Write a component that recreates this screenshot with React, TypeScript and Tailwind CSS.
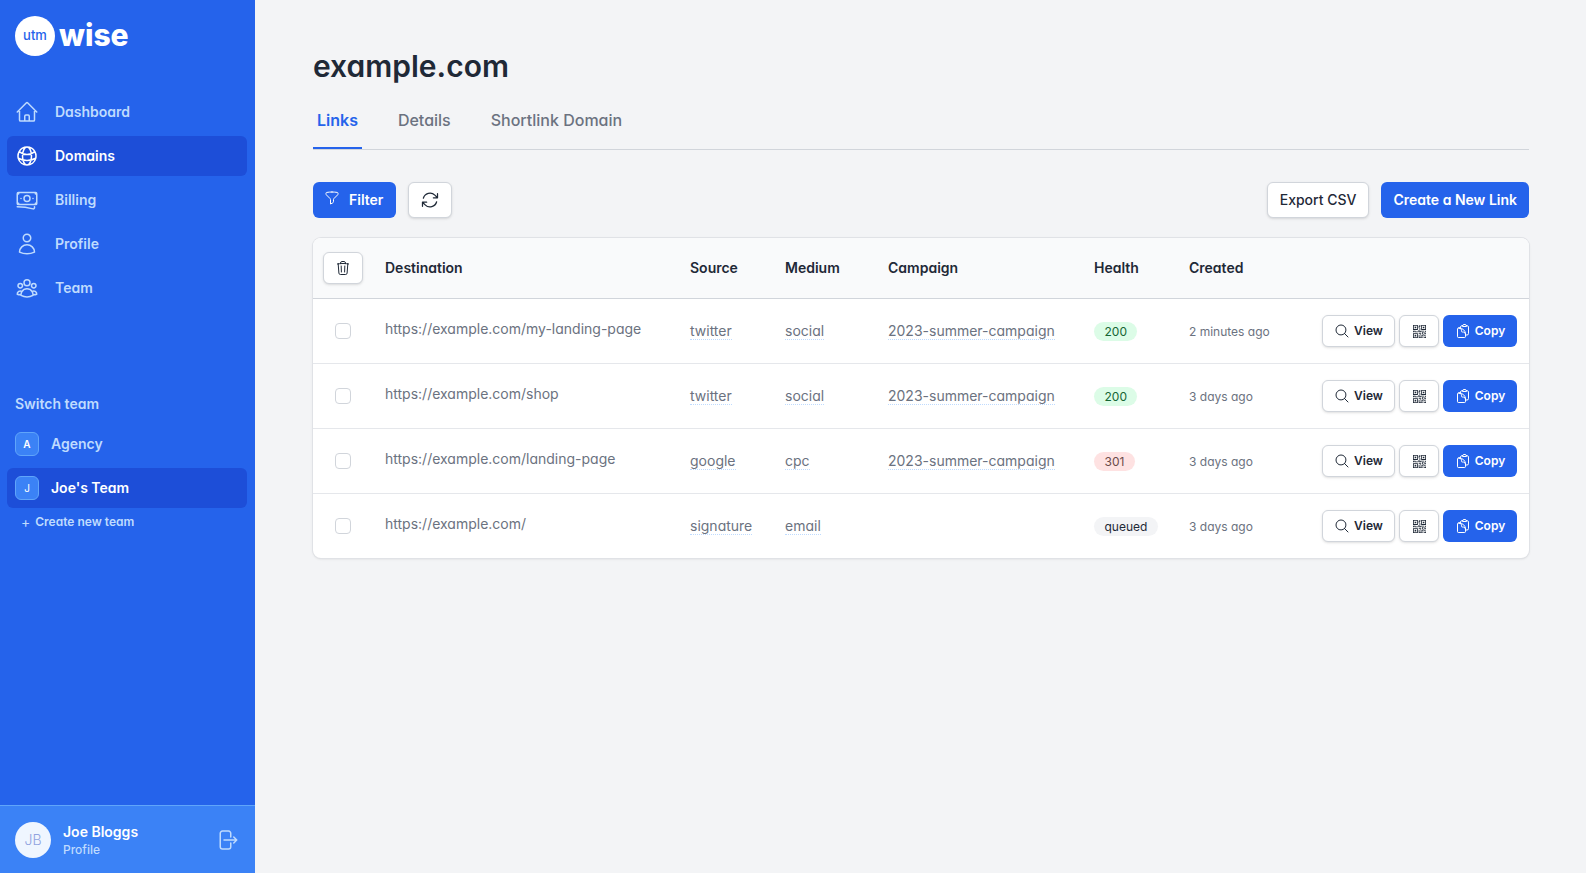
import React from 'react';
import {
  HiOutlineHome,
  HiOutlineGlobeAlt,
  HiOutlineBanknotes,
  HiOutlineUser,
  HiOutlineUserGroup,
  HiOutlineFunnel,
  HiOutlineArrowPath,
  HiOutlineTrash,
  HiOutlineMagnifyingGlass,
  HiOutlineClipboardDocument,
  HiOutlineArrowRightOnRectangle,
} from 'react-icons/hi2';
import { BsQrCode } from 'react-icons/bs';

const rows = [
  { url: 'https://example.com/my-landing-page', source: 'twitter', medium: 'social', campaign: '2023-summer-campaign', health: '200', created: '2 minutes ago' },
  { url: 'https://example.com/shop', source: 'twitter', medium: 'social', campaign: '2023-summer-campaign', health: '200', created: '3 days ago' },
  { url: 'https://example.com/landing-page', source: 'google', medium: 'cpc', campaign: '2023-summer-campaign', health: '301', created: '3 days ago' },
  { url: 'https://example.com/', source: 'signature', medium: 'email', campaign: '', health: 'queued', created: '3 days ago' },
];

const nav = [
  { label: 'Dashboard', icon: HiOutlineHome },
  { label: 'Domains', icon: HiOutlineGlobeAlt, active: true },
  { label: 'Billing', icon: HiOutlineBanknotes },
  { label: 'Profile', icon: HiOutlineUser },
  { label: 'Team', icon: HiOutlineUserGroup },
];

function healthClass(h: string) {
  if (h === '200') return 'bg-[#dcfce7] text-[#166534]';
  if (h === '301') return 'bg-[#fee2e2] text-[#6b4b4b]';
  return 'bg-[#f3f4f6] text-[#1f2937]';
}

export default function App() {
  return (
    <div className="flex h-[873px] bg-[#f3f4f6] font-['Inter',sans-serif] [font-feature-settings:'cv11'] overflow-hidden">
      <aside className="w-[255px] shrink-0 bg-[#2563eb] flex flex-col text-white">
        <div className="px-[15px] pt-[16px] flex items-start gap-[4px] h-[92px]">
          <div className="w-10 h-10 rounded-full bg-white text-[#2563eb] flex items-center justify-center text-[13px] font-medium">utm</div>
          <span className="text-[30px] font-extrabold leading-[38px]">wise</span>
        </div>
        <nav className="pl-[7px] pr-[8px] flex flex-col gap-[4px]">
          {nav.map((n) => (
            <div key={n.label} className={`h-10 rounded-md flex items-center gap-[16px] px-[8px] text-[14px] font-semibold ${n.active ? 'bg-[#1d4ed8] text-white' : 'text-[#bfdbfe]'}`}>
              <n.icon size={24} />
              <span className="pb-[2px]">{n.label}</span>
            </div>
          ))}
        </nav>
        <div className="px-[15px] mt-[85px] text-[14px] font-semibold text-[#bfdbfe]">Switch team</div>
        <div className="pl-[7px] pr-[8px] mt-[10px] flex flex-col gap-[4px]">
          <div className="h-10 rounded-md flex items-center gap-3 px-2 text-[14px] font-semibold text-[#bfdbfe]">
            <span className="w-6 h-6 rounded-md border border-[#60a5fa] bg-[#3b82f6] text-[10px] text-white flex items-center justify-center">A</span>
            <span className="pb-[2px]">Agency</span>
          </div>
          <div className="h-10 rounded-md flex items-center gap-3 px-2 text-[14px] font-semibold bg-[#1d4ed8]">
            <span className="w-6 h-6 rounded-md border border-[#60a5fa] bg-[#3b82f6] text-[10px] font-normal flex items-center justify-center">J</span>
            <span className="pb-[2px]">Joe's Team</span>
          </div>
        </div>
        <div className="px-[21px] mt-[6px] flex items-center gap-[5px] text-[12px] font-semibold leading-4 text-[#bfdbfe]">
          <span className="text-[14px] font-normal">+</span> Create new team
        </div>
        <div className="mt-auto h-[68px] bg-[#3b82f6] border-t border-[#60a5fa] flex items-center px-[15px]">
          <div className="w-9 h-9 rounded-full bg-[#eff6ff] text-[#8fa3e0] text-[14px] font-light flex items-center justify-center">JB</div>
          <div className="ml-3 flex-1">
            <div className="text-[14px] font-semibold leading-5">Joe Bloggs</div>
            <div className="text-[12px] font-medium leading-4 text-[#bfdbfe]">Profile</div>
          </div>
          <HiOutlineArrowRightOnRectangle size={24} className="text-[#bfdbfe] -ml-px mr-px" />
        </div>
      </aside>
      <main className="flex-1 pl-[58px] pr-[57px] pt-[48px]">
        <h1 className="text-[30px] font-semibold leading-9 text-[#1f2937]">example.com</h1>
        <div className="mt-[14px] flex border-b border-[#d1d5db] text-[16px] h-[52px]">
          <div className="px-1 pt-[10px] mr-[36px] font-semibold text-[#2563eb] border-b-2 border-[#2563eb]">Links</div>
          <div className="pt-[10px] mr-[40px] font-medium text-[#6b7280]">Details</div>
          <div className="pt-[10px] font-medium text-[#6b7280]">Shortlink Domain</div>
        </div>
        <div className="mt-8 flex items-center">
          <button className="h-9 w-[83px] pl-3 pb-px rounded-md bg-[#2563eb] text-white text-[14px] font-semibold flex items-center gap-[9px]">
            <HiOutlineFunnel size={16} className="-mt-1 -ml-px" /> Filter
          </button>
          <button className="ml-3 h-9 w-11 rounded-md bg-white border border-[#d1d5db] shadow-sm flex items-center justify-center text-[#1f2937]">
            <HiOutlineArrowPath size={20} />
          </button>
          <button className="ml-auto h-9 px-3 pb-px rounded-md bg-white border border-[#d1d5db] shadow-sm text-[14px] font-medium text-[#1f2937]">Export CSV</button>
          <button className="ml-3 h-9 px-3 pb-px rounded-md bg-[#2563eb] text-white text-[14px] font-semibold">Create a New Link</button>
        </div>
        <div className="mt-5 bg-white rounded-lg ring-1 ring-[#e0e2e6] shadow-sm overflow-hidden">
          <div className="h-[61px] bg-[#f9fafb] border-b border-[#d1d5db] flex items-center text-[14px] font-semibold text-[#1f2937]">
            <div className="w-[72px] pl-[10px]">
              <div className="w-10 h-8 bg-white border border-[#d1d5db] shadow-sm rounded-md flex items-center justify-center"><HiOutlineTrash size={16} /></div>
            </div>
            <div className="w-[305px] pb-[2px]">Destination</div>
            <div className="w-[95px] pb-[2px]">Source</div>
            <div className="w-[103px] pb-[2px]">Medium</div>
            <div className="w-[206px] pb-[2px]">Campaign</div>
            <div className="w-[95px] pb-[2px]">Health</div>
            <div className="pb-[2px]">Created</div>
          </div>
          {rows.map((r, i) => (
            <div key={r.url} className={`flex items-center text-[14px] text-[#6b7280] ${i > 0 ? 'h-[65px] border-t border-[#e5e7eb]' : 'h-[64px]'}`}>
              <div className="w-[72px] pl-[22px]"><div className="w-4 h-4 rounded border border-[#d1d5db] bg-white" /></div>
              <div className="w-[305px] -mt-[6px]">{r.url}</div>
              <div className="w-[95px] -mt-[2px]"><span className="border-b border-dotted border-[#bfdbfe]">{r.source}</span></div>
              <div className="w-[103px] -mt-[2px]"><span className="border-b border-dotted border-[#bfdbfe]">{r.medium}</span></div>
              <div className="w-[206px] -mt-[2px]">{r.campaign && <span className="border-b border-dotted border-[#bfdbfe]">{r.campaign}</span>}</div>
              <div className="w-[95px] -mt-[2px]"><span className={`px-[10.5px] py-[2px] rounded-full text-[12px] ${healthClass(r.health)}`}>{r.health}</span></div>
              <div className="text-[12px] mt-px">{r.created}</div>
              <div className="ml-auto pr-3 flex items-center gap-1">
                <button className="h-8 w-[73px] rounded-md bg-white border border-[#d1d5db] shadow-sm text-[12px] font-semibold text-[#1f2937] flex items-center justify-center gap-1"><HiOutlineMagnifyingGlass size={16} />View</button>
                <button className="h-8 w-10 rounded-md bg-white border border-[#d1d5db] shadow-sm text-[#1f2937] flex items-center justify-center"><BsQrCode size={13} /></button>
                <button className="h-8 w-[74px] rounded-md bg-[#2563eb] text-white text-[12px] font-semibold flex items-center justify-center gap-1"><HiOutlineClipboardDocument size={16} />Copy</button>
              </div>
            </div>
          ))}
        </div>
      </main>
    </div>
  );
}
